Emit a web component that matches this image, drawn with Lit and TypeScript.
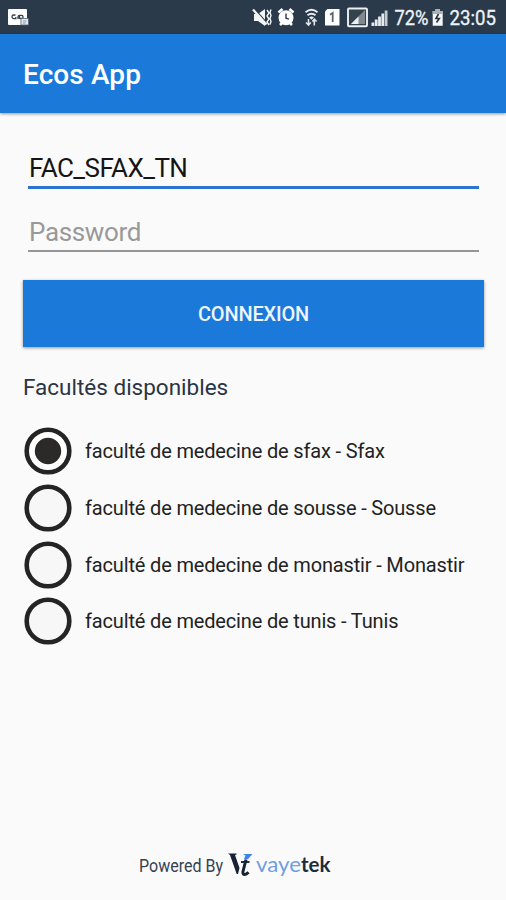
import { LitElement, html, css, svg } from "lit";
import { customElement, property, state } from "lit/decorators.js";
import { classMap } from "lit/directives/class-map.js";

@customElement("status-bar")
class StatusBar extends LitElement {
  static styles = css`
    :host { display: block; height: 34px; background: #2a3a4a; }
    svg { display: block; }
    .t { font: 400 20px Roboto, sans-serif; fill: #eef3f7; stroke: #eef3f7; stroke-width: .3px; }
  `;
  render() {
    const bars = [0, 1, 2, 3, 4].map(
      (i) => svg`<rect x=${371.5 + i * 3.3} y=${22.5 - i * 3} width="2.8" height=${3.5 + i * 3} fill=${i > 3 ? "#c4ccd2" : "#e6ebef"}/>`
    );
    return html`<svg width="506" height="34" viewBox="0 0 506 34">
      <rect x="8" y="9" width="19" height="16" rx="1" fill="#fff"/>
      <path d="M15.500 15h-1.700a1.800 1.800 0 0 0 0 3.600h2v-1.600M18 19v-2.200a1.500 1.500 0 0 1 1.500-1.500V19M20 15.300h1.500a1.600 1.600 0 0 1 0 3.200h-1.500" fill="none" stroke="#33424f" stroke-width="1.300"/>
      <rect x="21" y="18.500" width="7.500" height="6.500" fill="#e4e9ed" stroke="#536270" stroke-width=".8"/>
      <path d="M23 21h3.500M23 23h2.500" stroke="#8b969f"/>

      <path d="M254 14h4l7-5v17l-7-5h-4z" fill="#f3f6f8"/>
      <path d="M254.500 9l12 13.500" stroke="#2a3a4a" stroke-width="1.500"/>
      <path d="M253 9.500l13.500 15" stroke="#f3f6f8" stroke-width="2.200"/>
      <path d="M267 10l2 3-2 3 2 3-2 3 2 3M271 9.500l-1 3 1 3-1 3 1 3-1 3" fill="none" stroke="#f3f6f8" stroke-width="1.400"/>

      <circle cx="286" cy="17.700" r="7.500" fill="#fff"/>
      <path d="M278.500 12.500l4-3.500M293.500 12.500l-4-3.500M280 25l2.500-2.500M292 25l-2.500-2.500" stroke="#fff" stroke-width="2.600"/>
      <path d="M286 13.500v4.700l3 1" stroke="#2a3a4a" stroke-width="1.400" fill="none"/>

      <path d="M305.500 12.300q6-5 12 0M307.500 15.300q4-3.200 8 0" fill="none" stroke="#e9eef2" stroke-width="1.800"/>
      <path d="M309 17.300q2.500-1.800 5 0l-2.500 2.500z" fill="#e9eef2"/>
      <path d="M308.500 19v6.500M306 22.500l2.500 2.500 2.300-2.500M314.300 25.500V19M312.300 21.500l2-2.300 2.300 2.300" fill="none" stroke="#dfe5ea" stroke-width="1.600"/>

      <path d="M327.500 9h12v16.500H325V11.500z" fill="#fff"/>
      <path d="M330 14.800l2.700-1.800v9" fill="none" stroke="#5b6670" stroke-width="1.800"/>

      <rect x="348" y="8.500" width="19" height="17.800" rx="1" fill="#34424e" stroke="#edf0f2" stroke-width="1.900"/>
      <path d="M351 24L365 10v14z" fill="#81898f"/>
      <path d="M351 24l7.500-7.500V24z" fill="#edf0f2"/>
      ${bars}
      <text class="t" x="394.500" y="25.200" textLength="34" lengthAdjust="spacingAndGlyphs">72%</text>
      <path d="M435.500 9h4.500v2h2.700v14.700h-10V11h2.800z" fill="#f4f6f8"/>
      <path d="M435.500 9h4.500v2h2.700v3h-10v-3h2.800z" fill="#a9b2b9"/>
      <path d="M438.500 14l-2.500 4.500h3.300L436.500 22.500" fill="none" stroke="#26323d" stroke-width="1.600"/>
      <text class="t" x="449.500" y="25.200" textLength="46.500" lengthAdjust="spacingAndGlyphs">23:05</text>
    </svg>`;
  }
}

@customElement("faculty-option")
class FacultyOption extends LitElement {
  @property() label = "";
  @property({ type: Boolean }) checked = false;
  static styles = css`
    :host { display: flex; align-items: center; height: 56.700px; gap: 13px; font: 400 20px Roboto, sans-serif; color: #222; cursor: pointer; }
    svg { display: block; flex: none; }
    .ring { fill: #f7f7f7; stroke: #242424; stroke-width: 4.600px; }
    .on { fill: #fff; }
    .dot { fill: #2b2a29; }
    .label { white-space: nowrap; letter-spacing: -.16px; }
  `;
  render() {
    return html`<svg width="48" height="48" viewBox="0 0 48 48">
        <circle class=${classMap({ ring: true, on: this.checked })} cx="24" cy="24" r="21.300"/>
        ${this.checked ? svg`<circle class="dot" cx="24" cy="24" r="13.200"/>` : ""}
      </svg><span class="label">${this.label}</span>`;
  }
}

@customElement("app-root")
class AppRoot extends LitElement {
  @state() selected = 0;
  private faculties = [
    "faculté de medecine de sfax - Sfax",
    "faculté de medecine de sousse - Sousse",
    "faculté de medecine de monastir - Monastir",
    "faculté de medecine de tunis - Tunis",
  ];
  static styles = css`
    :host { display: flex; flex-direction: column; height: 900px; background: #fafafa; font-family: Roboto, sans-serif; overflow: hidden; }
    .bar { height: 79px; box-sizing: border-box; background: #1b79d9; color: #fff; font-size: 28px; font-weight: 500; letter-spacing: .1px; line-height: 82px; padding-left: 23px; box-shadow: 0 1px 3px rgba(0,0,0,.4); flex: none; }
    main { padding: 33px 22px 0 23px; display: flex; flex-direction: column; }
    .field { box-sizing: border-box; margin: 0 5px; height: 43px; line-height: 44px; font-size: 26px; letter-spacing: -.55px; padding-left: 1px; color: #151515; border-bottom: 3px solid #2b73cf; }
    .empty { margin-top: 21px; height: 42px; line-height: 44px; letter-spacing: -.35px; color: #999; border-bottom: 2px solid #959595; }
    .button { margin-top: 28px; height: 67px; background: #1b79d9; color: #edf5ff; border: 0; padding: 1px 0 0; font: 500 20px Roboto, sans-serif; letter-spacing: -.2px; box-shadow: 0 1px 3px rgba(0,0,0,.4); }
    h2 { margin: 26px 0 0; font-size: 22.500px; font-weight: 400; line-height: 28px; color: #2b3442; }
    .list { margin-top: 22px; padding-left: 1px; }
    footer { margin-top: auto; height: 52px; padding-left: 139px; display: flex; align-items: flex-start; }
    .powered { font-size: 18px; line-height: 36px; color: #354252; width: 89px; white-space: nowrap; transform: scaleX(.89); transform-origin: left; }
    .thin { font: 400 21px Lato, sans-serif; fill: #6f9fe2; }
    .bold { font: 700 21px Lato, sans-serif; fill: #1d2b3f; }
  `;
  render() {
    return html`
      <status-bar></status-bar>
      <header class="bar">Ecos App</header>
      <main>
        <div class="field">FAC_SFAX_TN</div>
        <div class="field empty">Password</div>
        <button class="button">CONNEXION</button>
        <h2>Facultés disponibles</h2>
        <div class="list">
          ${this.faculties.map((f, i) => html`<faculty-option .label=${f} .checked=${i === this.selected} @click=${() => (this.selected = i)}></faculty-option>`)}
        </div>
      </main>
      <footer>
        <span class="powered">Powered By</span>
        <svg width="106" height="34" viewBox="228 848 106 34">
          <path d="M228 853.500h8.500v1l-1.500.5 4.500 13-1.500 6h-1.300L230 855z" fill="#172235"/>
          <path d="M243 854h9.500l-4.500 5h-4l1.500-3.500z" fill="#3c85e6"/>
          <path d="M241 862h8.500" stroke="#172235" stroke-width="1.900"/>
          <path d="M246 859.500l-3 12c-.8 3.500 2.500 4 5.500.8" fill="none" stroke="#172235" stroke-width="3"/>
          <text class="thin" x="256" y="871.500" textLength="45" lengthAdjust="spacingAndGlyphs">vaye</text>
          <text class="bold" x="301" y="871.500" textLength="29.500" lengthAdjust="spacingAndGlyphs">tek</text>
        </svg>
      </footer>`;
  }
}
